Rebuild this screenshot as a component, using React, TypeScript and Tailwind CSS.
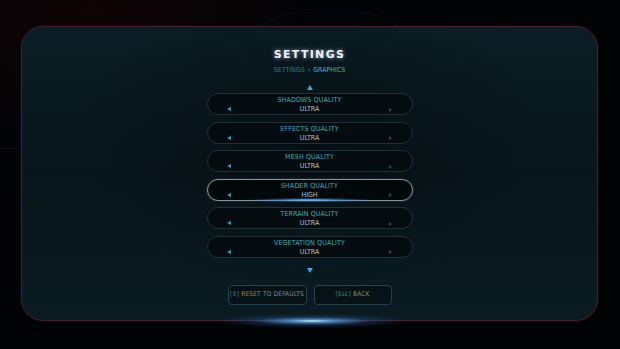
import React from "react";

const rows = [
  { label: "SHADOWS QUALITY", value: "ULTRA" },
  { label: "EFFECTS QUALITY", value: "ULTRA" },
  { label: "MESH QUALITY", value: "ULTRA" },
  { label: "SHADER QUALITY", value: "HIGH", active: true },
  { label: "TERRAIN QUALITY", value: "ULTRA" },
  { label: "VEGETATION QUALITY", value: "ULTRA" },
];

const narrow = { fontFamily: '"Liberation Sans Narrow", "DejaVu Sans Condensed", "Liberation Sans", sans-serif' };

function Row({ label, value, active }: { label: string; value: string; active?: boolean }) {
  return (
    <div
      className={`relative w-[206px] h-[22px] rounded-[11px] border flex flex-col items-center ${
        active
          ? "border-[#8a969e] bg-[#03080b] shadow-[0_0_3px_rgba(200,210,220,0.2)]"
          : "border-[#223036] bg-[#050c10]"
      }`}
      style={narrow}
    >
      <div className="mt-[2px] text-[7px] leading-[9px] text-[#3ab0b8] tracking-[0.02em]">{label}</div>
      <div className="w-[160px] h-px bg-gradient-to-r from-transparent via-[#1c343b] to-transparent" />
      <div className="relative w-full flex items-center justify-center h-[9px]">
        <span className="absolute left-[19px] top-[2px] w-0 h-0 border-y-[2.5px] border-y-transparent border-r-[4px] border-r-[#2a9fc8]" />
        <span className="text-[7px] leading-[9px] text-[#b8c0c2]">{value}</span>
        <span className="absolute right-[20px] top-[2.5px] w-0 h-0 border-y-[2px] border-y-transparent border-l-[3px] border-l-[#2a4a56]" />
      </div>
      {active && (
        <div className="absolute left-[40px] right-[40px] bottom-[-2px] h-[4px] rounded-full bg-[radial-gradient(ellipse_at_center,rgba(150,210,255,0.95)_0%,rgba(60,140,220,0.6)_35%,rgba(30,80,160,0)_75%)]" />
      )}
    </div>
  );
}

export default function App() {
  return (
    <div className="relative w-[620px] h-[349px] overflow-hidden bg-[#020305]">
      <div className="absolute inset-0 bg-[radial-gradient(ellipse_at_15%_3%,rgba(40,8,10,0.35)_0%,rgba(0,0,0,0)_30%)]" />
      <div className="absolute left-[240px] top-[12px] w-[180px] h-[120px] rounded-full border border-[#080e16]" />
      <div className="absolute left-0 top-[148px] w-[22px] h-px bg-[#10131c]" />
      <div className="relative pt-[26px] pl-[21px]">
        <div className="relative w-[577px] h-[295px] rounded-[22px] border border-[#43222c] bg-gradient-to-b from-[#0b1d24] via-[#08161c] to-[#0a1b21] shadow-[0_0_2px_rgba(100,30,50,0.5)] flex flex-col items-center">
          <div className="absolute inset-0 rounded-[22px] bg-[radial-gradient(ellipse_at_50%_40%,rgba(0,0,0,0.35)_0%,rgba(0,0,0,0)_60%)]" />
          <div
            className="relative mt-[22px] text-[11px] leading-[12px] font-bold tracking-[0.12em] text-[#eef2f4] [text-shadow:0_0_4px_rgba(200,220,255,0.7)]"
            style={{ fontFamily: '"DejaVu Sans", sans-serif' }}
          >
            SETTINGS
          </div>
          <div className="relative mt-[5px] text-[7px] leading-[9px] flex items-center gap-[3px]" style={narrow}>
            <span className="text-[#267a82]">SETTINGS</span>
            <span className="text-[#3cb8c0]">›</span>
            <span className="text-[#3cb8c0]">GRAPHICS</span>
          </div>
          <div className="relative mt-[10px] w-0 h-0 border-x-[3.5px] border-x-transparent border-b-[5px] border-b-[#3aa8dc]" />
          <div className="relative mt-[3px] flex flex-col gap-[6.5px]">
            {rows.map((r) => (
              <Row key={r.label} {...r} />
            ))}
          </div>
          <div className="relative mt-[10px] w-0 h-0 border-x-[3.5px] border-x-transparent border-t-[5px] border-t-[#3aa8dc]" />
          <div className="relative mt-[12px] flex gap-[7px]" style={narrow}>
            <div className="w-[79px] h-[20px] rounded-[4px] border border-[#27424b] bg-[#071217] flex items-center justify-center text-[6.5px] text-[#7f8c91] tracking-[0.03em]">
              <span className="text-[#2f8e98]">[X]</span>&nbsp;RESET TO DEFAULTS
            </div>
            <div className="w-[78px] h-[20px] rounded-[4px] border border-[#27424b] bg-[#071217] flex items-center justify-center text-[6.5px] text-[#7f8c91] tracking-[0.03em]">
              <span className="text-[#2f8e98]">[Esc]</span>&nbsp;BACK
            </div>
          </div>
          <div className="absolute left-[190px] w-[200px] bottom-[-8px] h-[14px] rounded-full bg-[radial-gradient(ellipse_at_center,rgba(200,235,255,1)_0%,rgba(90,170,230,0.75)_15%,rgba(40,100,180,0.3)_40%,rgba(20,60,120,0)_70%)]" />
        </div>
      </div>
    </div>
  );
}
